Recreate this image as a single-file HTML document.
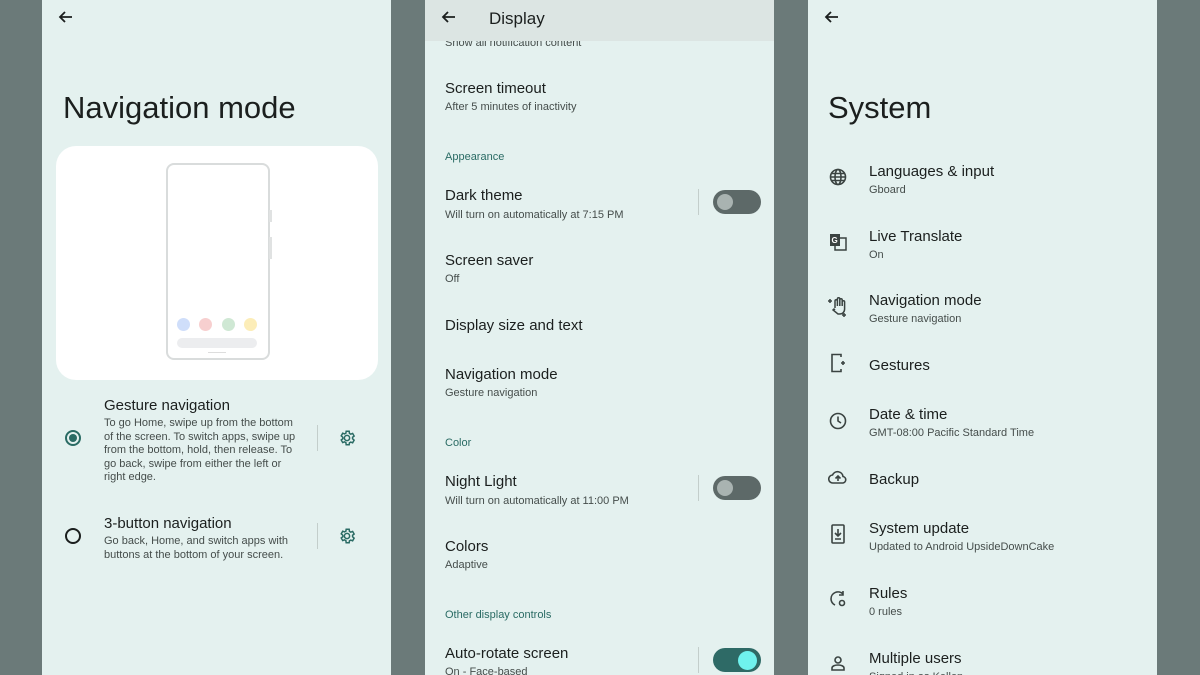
<!DOCTYPE html>
<html><head><meta charset="utf-8"><style>
*{margin:0;padding:0;box-sizing:border-box}
body{width:1200px;height:675px;background:#6b7a79;position:relative;overflow:hidden;font-family:"Liberation Sans",sans-serif;color:#1b1f1e}
.p{position:absolute;top:0;height:675px;width:349px;background:#e4f1ef;overflow:hidden}
.a{position:absolute}
.t{position:absolute;font-size:15px;color:#1b1f1e;white-space:nowrap;margin-top:2px}
.s{position:absolute;font-size:11px;color:#454d4b;white-space:nowrap;margin-top:2px}
.h{position:absolute;font-size:11px;color:#2a6b64;white-space:nowrap;margin-top:2px}
.sw{position:absolute;width:48px;height:24px;border-radius:12px;background:#5d6968}
.sw i{position:absolute;left:4px;top:4px;width:16px;height:16px;border-radius:50%;background:#a9b3b1}
.sw.on{background:#2e6a66}.sw.on i{left:25px;top:3px;width:19px;height:19px;background:#6ff2ee}
.dv{position:absolute;width:1px;height:26px;background:#c3cecb}
</style></head><body>

<!-- Panel 1 -->
<div class="p" style="left:42px">
<svg class="a" style="left:15px;top:8px" width="18" height="18" viewBox="0 0 18 18"><path d="M15 9H3M8 4L3 9l5 5" stroke="#1b1f1e" stroke-width="1.8" fill="none"/></svg>
<div class="a" style="left:21px;top:90px;font-size:31px;color:#1b1f1e">Navigation mode</div>
<div class="a" style="left:14px;top:146px;width:322px;height:234px;background:#fff;border-radius:20px"></div>
<div class="a" style="left:124px;top:163px;width:104px;height:197px;border:2px solid #d9dcdc;border-radius:8px;background:#fff"></div>
<div class="a" style="left:227px;top:210px;width:3px;height:12px;background:#e0e2e2"></div>
<div class="a" style="left:227px;top:237px;width:3px;height:22px;background:#e0e2e2"></div>
<div class="a" style="left:135px;top:318px;width:13px;height:13px;border-radius:50%;background:#cfdefa"></div>
<div class="a" style="left:157px;top:318px;width:13px;height:13px;border-radius:50%;background:#f7cfcf"></div>
<div class="a" style="left:180px;top:318px;width:13px;height:13px;border-radius:50%;background:#cfe8d4"></div>
<div class="a" style="left:202px;top:318px;width:13px;height:13px;border-radius:50%;background:#fcedb8"></div>
<div class="a" style="left:135px;top:338px;width:80px;height:10px;border-radius:5px;background:#ecedef"></div>
<div class="a" style="left:166px;top:352px;width:18px;height:1px;background:#ddd"></div>

<div class="a" style="left:23px;top:430px;width:16px;height:16px;border:2px solid #2a6b64;border-radius:50%"><div style="margin:2px;width:8px;height:8px;border-radius:50%;background:#2a6b64"></div></div>
<div class="a" style="left:62px;top:397px;font-size:15px">Gesture navigation</div>
<div class="a" style="left:62px;top:417px;width:200px;font-size:11px;line-height:13.5px;color:#454d4b">To go Home, swipe up from the bottom of the screen. To switch apps, swipe up from the bottom, hold, then release. To go back, swipe from either the left or right edge.</div>
<div class="dv" style="left:275px;top:425px"></div>
<svg class="a" style="left:296px;top:429px" width="18" height="18" viewBox="0 0 24 24"><path d="M12 15.5a3.5 3.5 0 1 0 0-7 3.5 3.5 0 0 0 0 7zM19.4 13a7.5 7.5 0 0 0 0-2l2.1-1.6-2-3.5-2.5 1a7.5 7.5 0 0 0-1.7-1L14.9 3h-4l-.4 2.6a7.5 7.5 0 0 0-1.7 1l-2.5-1-2 3.5L6.4 11a7.5 7.5 0 0 0 0 2l-2.1 1.6 2 3.5 2.5-1a7.5 7.5 0 0 0 1.7 1l.4 2.9h4l.4-2.6a7.5 7.5 0 0 0 1.7-1l2.5 1 2-3.5z" stroke="#2a6b64" stroke-width="2" fill="none"/></svg>

<div class="a" style="left:23px;top:528px;width:16px;height:16px;border:2px solid #1b1f1e;border-radius:50%"></div>
<div class="a" style="left:62px;top:515px;font-size:15px">3-button navigation</div>
<div class="a" style="left:62px;top:535px;width:200px;font-size:11px;line-height:13.5px;color:#454d4b">Go back, Home, and switch apps with buttons at the bottom of your screen.</div>
<div class="dv" style="left:275px;top:523px"></div>
<svg class="a" style="left:296px;top:527px" width="18" height="18" viewBox="0 0 24 24"><path d="M12 15.5a3.5 3.5 0 1 0 0-7 3.5 3.5 0 0 0 0 7zM19.4 13a7.5 7.5 0 0 0 0-2l2.1-1.6-2-3.5-2.5 1a7.5 7.5 0 0 0-1.7-1L14.9 3h-4l-.4 2.6a7.5 7.5 0 0 0-1.7 1l-2.5-1-2 3.5L6.4 11a7.5 7.5 0 0 0 0 2l-2.1 1.6 2 3.5 2.5-1a7.5 7.5 0 0 0 1.7 1l.4 2.9h4l.4-2.6a7.5 7.5 0 0 0 1.7-1l2.5 1 2-3.5z" stroke="#2a6b64" stroke-width="2" fill="none"/></svg>
</div>

<!-- Panel 2 -->
<div class="p" style="left:425px">
<div class="s" style="left:20px;top:35px">Show all notification content</div>
<div class="a" style="left:0;top:0;width:349px;height:41px;background:#dce5e3"></div>
<svg class="a" style="left:15px;top:8px" width="18" height="18" viewBox="0 0 18 18"><path d="M15 9H3M8 4L3 9l5 5" stroke="#1b1f1e" stroke-width="1.8" fill="none"/></svg>
<div class="t" style="left:64px;top:7px;font-size:17px">Display</div>

<div class="t" style="left:20px;top:78px">Screen timeout</div><div class="s" style="left:20px;top:99px">After 5 minutes of inactivity</div>
<div class="h" style="left:20px;top:149px">Appearance</div>
<div class="t" style="left:20px;top:185px">Dark theme</div><div class="s" style="left:20px;top:207px">Will turn on automatically at 7:15 PM</div>
<div class="dv" style="left:273px;top:189px"></div><div class="sw" style="left:288px;top:190px"><i></i></div>
<div class="t" style="left:20px;top:250px">Screen saver</div><div class="s" style="left:20px;top:271px">Off</div>
<div class="t" style="left:20px;top:315px">Display size and text</div>
<div class="t" style="left:20px;top:364px">Navigation mode</div><div class="s" style="left:20px;top:385px">Gesture navigation</div>
<div class="h" style="left:20px;top:435px">Color</div>
<div class="t" style="left:20px;top:471px">Night Light</div><div class="s" style="left:20px;top:493px">Will turn on automatically at 11:00 PM</div>
<div class="dv" style="left:273px;top:475px"></div><div class="sw" style="left:288px;top:476px"><i></i></div>
<div class="t" style="left:20px;top:536px">Colors</div><div class="s" style="left:20px;top:557px">Adaptive</div>
<div class="h" style="left:20px;top:607px">Other display controls</div>
<div class="t" style="left:20px;top:643px">Auto-rotate screen</div><div class="s" style="left:20px;top:664px">On - Face-based</div>
<div class="dv" style="left:273px;top:647px"></div><div class="sw on" style="left:288px;top:648px"><i></i></div>
</div>

<!-- Panel 3 -->
<div class="p" style="left:808px">
<svg class="a" style="left:15px;top:8px" width="18" height="18" viewBox="0 0 18 18"><path d="M15 9H3M8 4L3 9l5 5" stroke="#1b1f1e" stroke-width="1.8" fill="none"/></svg>
<div class="a" style="left:20px;top:90px;font-size:31px">System</div>
<svg class="a" style="left:21px;top:168px" width="18" height="18" viewBox="0 0 18 18" fill="none" stroke="#3a4341" stroke-width="1.6"><circle cx="9" cy="9" r="7.5"/><ellipse cx="9" cy="9" rx="3" ry="7.5"/><path d="M1.5 9h15M2.5 5.5h13M2.5 12.5h13"/></svg>
<div class="t" style="left:61px;top:161px">Languages &amp; input</div><div class="s" style="left:61px;top:182px">Gboard</div>
<svg class="a" style="left:21px;top:233px" width="18" height="18" viewBox="0 0 18 18"><rect x="1" y="1" width="10" height="12" fill="#3a4341"/><rect x="6" y="5" width="11" height="12" fill="none" stroke="#3a4341" stroke-width="1.5"/><text x="2.5" y="10" font-size="8" fill="#fff" font-family="Liberation Sans" font-weight="bold">G</text></svg>
<div class="t" style="left:61px;top:226px">Live Translate</div><div class="s" style="left:61px;top:247px">On</div>
<svg class="a" style="left:20px;top:296px" width="20" height="22" viewBox="0 0 20 22" fill="none" stroke="#3a4341" stroke-width="1.5"><path d="M7 12V5a1.2 1.2 0 0 1 2.4 0v5V3a1.2 1.2 0 0 1 2.4 0v7V4a1.2 1.2 0 0 1 2.4 0v6V6a1.2 1.2 0 0 1 2.4 0v7c0 3-2 5-5 5H10l-5-4 1-1 1 1"/><path d="M2 3v4M0 5h4M16 17v4M14 19h4"/></svg>
<div class="t" style="left:61px;top:290px">Navigation mode</div><div class="s" style="left:61px;top:311px">Gesture navigation</div>
<svg class="a" style="left:22px;top:353px" width="16" height="20" viewBox="0 0 16 20" fill="none" stroke="#3a4341" stroke-width="1.6"><path d="M11 4V1.5H2v17h9V16"/><path d="M13 8v4M11 10h4"/></svg>
<div class="t" style="left:61px;top:355px">Gestures</div>
<svg class="a" style="left:21px;top:412px" width="18" height="18" viewBox="0 0 18 18" fill="none" stroke="#3a4341" stroke-width="1.6"><circle cx="9" cy="9" r="7.5"/><path d="M9 4.5V9l3 2"/></svg>
<div class="t" style="left:61px;top:404px">Date &amp; time</div><div class="s" style="left:61px;top:425px">GMT-08:00 Pacific Standard Time</div>
<svg class="a" style="left:20px;top:470px" width="20" height="16" viewBox="0 0 20 16" fill="none" stroke="#3a4341" stroke-width="1.6"><path d="M5 13a4 4 0 0 1-.5-8 5.5 5.5 0 0 1 10.5 1.5A3.3 3.3 0 0 1 15 13zM10 11V6M7.5 8.5L10 6l2.5 2.5"/></svg>
<div class="t" style="left:61px;top:469px">Backup</div>
<svg class="a" style="left:22px;top:524px" width="16" height="20" viewBox="0 0 16 20" fill="none" stroke="#3a4341" stroke-width="1.6"><rect x="2" y="1" width="12" height="18" rx="1"/><path d="M8 5v7M5 9l3 3 3-3M5 15h6"/></svg>
<div class="t" style="left:61px;top:518px">System update</div><div class="s" style="left:61px;top:539px">Updated to Android UpsideDownCake</div>
<svg class="a" style="left:20px;top:589px" width="20" height="20" viewBox="0 0 20 20" fill="none" stroke="#3a4341" stroke-width="1.6"><path d="M15 5A7 7 0 0 0 3 10a7 7 0 0 0 4 6M15 2v4h-4"/><circle cx="14" cy="14" r="2.5"/></svg>
<div class="t" style="left:61px;top:583px">Rules</div><div class="s" style="left:61px;top:604px">0 rules</div>
<svg class="a" style="left:22px;top:655px" width="16" height="16" viewBox="0 0 16 16" fill="none" stroke="#3a4341" stroke-width="1.6"><circle cx="8" cy="5" r="3"/><path d="M2 15v-2c0-2 3-3 6-3s6 1 6 3v2z"/></svg>
<div class="t" style="left:61px;top:648px">Multiple users</div><div class="s" style="left:61px;top:669px">Signed in as Kellen</div>
</div>
</body></html>
